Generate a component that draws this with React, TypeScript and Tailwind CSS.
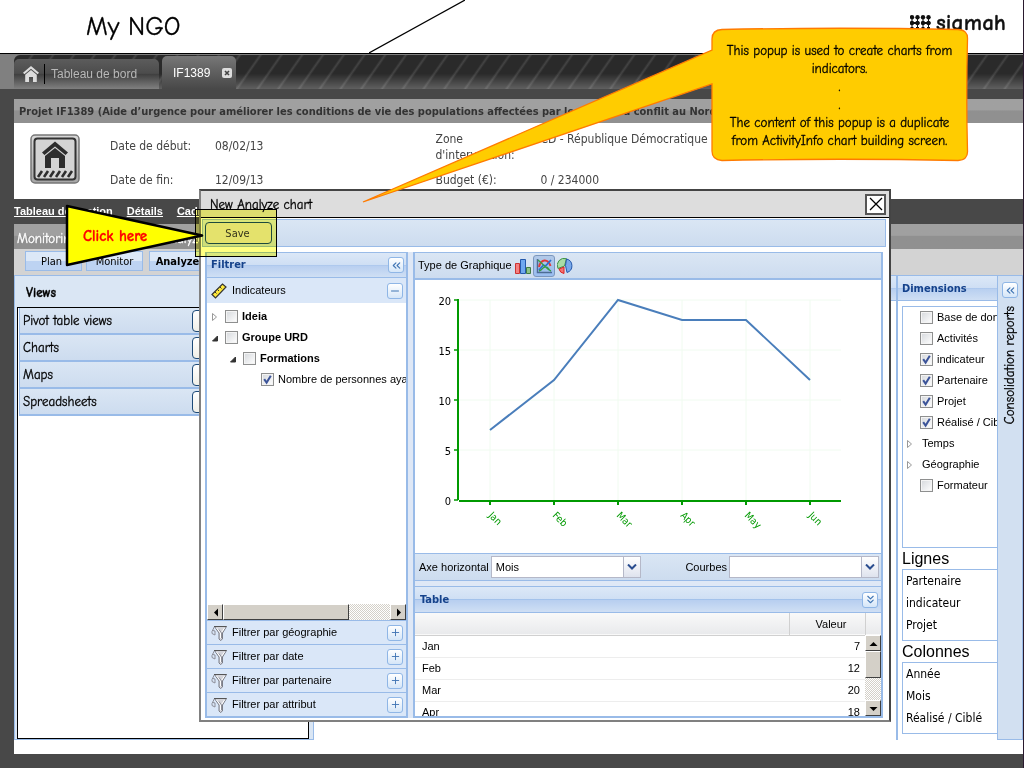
import type { ReactNode } from "react";
import { ChevronsDown, ChevronsLeft, Minus, Plus } from "lucide-react";

const comic =
  "font-['Comic_Sans_MS','Comic_Neue',Lato,sans-serif] [-webkit-text-stroke:0.3px_currentColor]";
const arial = "font-['Liberation_Sans',Arial,sans-serif]";
const tahoma = "font-['DejaVu_Sans_Condensed','DejaVu_Sans',sans-serif]";
const barFill = "bg-linear-to-b from-[#dae6f4] to-[#cddcef]";
const headFill =
  "bg-[linear-gradient(#dce8f7,#cfdff4_48%,#99bbe8_48%,#b8cff0_54%,#cfdff4)]";
const dither =
  "bg-[repeating-conic-gradient(#d4d0c8_0_25%,#fff_0_50%)] bg-[length:2px_2px]";

function ToolButton({ label, children }: { label: string; children: ReactNode }) {
  return (
    <button
      aria-label={label}
      className="flex size-4 shrink-0 items-center justify-center rounded-[3px] border border-[#8fb6e6] bg-linear-to-b from-white to-[#d5e6f8] text-[#3f74b3]"
    >
      {children}
    </button>
  );
}

function Check({ label, checked, bold }: { label: string; checked?: boolean; bold?: boolean }) {
  return (
    <label className="flex items-center gap-1 whitespace-nowrap">
      <span className="relative block size-[13px] shrink-0">
        <input
          type="checkbox"
          defaultChecked={checked}
          className="peer block size-[13px] appearance-none border border-[#8e8f8f] bg-linear-to-br from-[#d5d8dc] to-white shadow-[inset_0_0_0_1px_#f4f4f4]"
        />
        <svg viewBox="0 0 13 13" className="pointer-events-none absolute inset-0 hidden size-[13px] peer-checked:block">
          <path d="M3.2 6.2 5.6 9.6 9.8 2.8" fill="none" stroke="#3c5499" strokeWidth="2" />
        </svg>
      </span>
      <span className={bold ? "font-bold" : ""}>{label}</span>
    </label>
  );
}

function Arrow({ open }: { open?: boolean }) {
  return (
    <svg viewBox="0 0 8 10" className="h-[10px] w-2 shrink-0">
      {open ? (
        <path d="M6.500 3v5H1.500z" fill="#333" stroke="#333" />
      ) : (
        <path d="M1.5 1.5v7l4-3.5z" fill="#fff" stroke="#999" />
      )}
    </svg>
  );
}

function ScrollArrow({ dir }: { dir: "left" | "right" | "up" | "down" }) {
  const d = {
    left: "M8 1.500v8L4 5.500z",
    right: "M4 1.500v8l4-4z",
    up: "M1.500 8h8L5.500 4z",
    down: "M1.500 4h8L5.500 8z",
  }[dir];
  return (
    <button
      aria-label={"Scroll " + dir}
      className="flex size-4 shrink-0 items-center justify-center border border-t-white border-r-[#404040] border-b-[#404040] border-l-white bg-[#d4d0c8]"
    >
      <svg viewBox="0 0 11 11" className="size-[11px]">
        <path d={d} />
      </svg>
    </button>
  );
}

function House({ className }: { className: string }) {
  return (
    <svg viewBox="0 0 16 16" className={className} fill="currentColor">
      <path d="M8 0 16 6.800 14.600 8.300 8 2.800 1.400 8.300 0 6.800z" />
      <path d="M8 4 13.800 8.800V16H10V11H6v5H2.200V8.800z" />
    </svg>
  );
}

function ProjectIcon() {
  return (
    <svg viewBox="0 0 50 50" className="size-[50px]">
      <defs>
        <linearGradient id="plate" x1="0" y1="0" x2="0" y2="1">
          <stop offset="0" stopColor="#d8d8d8" />
          <stop offset="1" stopColor="#a6a6a6" />
        </linearGradient>
      </defs>
      <rect x="1" y="1" width="48" height="48" rx="4" fill="url(#plate)" stroke="#777" strokeWidth="1.500" />
      <rect x="4.500" y="4.500" width="41" height="41" rx="3" fill="#d4d4d4" stroke="#333" strokeWidth="2" />
      <path d="M25 7.500 38 18.500 35.500 21 25 12.500 14.500 21 12 18.500z" fill="#2d2d2d" />
      <path d="M25 14 35 22V34H29V24H21V34H15V22z" fill="#2d2d2d" />
      <path d="M8 43 12 37M14 43 18 37M20 43 24 37M26 43 30 37M32 43 36 37M38 43 42 37" stroke="#2d2d2d" strokeWidth="2.600" />
    </svg>
  );
}

function SigmahMark() {
  return (
    <svg viewBox="0 0 21 16" className="h-4 w-[21px]" fill="#111">
      {[2, 7.5, 13, 18.5].map((x) =>
        [2.2, 8].map((y) => <circle key={x + "-" + y} cx={x} cy={y} r="2.200" />)
      )}
      <path d="M.5 12h3v4h-3zM6 12h3v4H6zM11.500 12h3v4h-3zM17 12h3v4h-3z" />
      <path d="M1.500 2h1v12h-1zM7 2h1v12H7zM12.500 2h1v12h-1zM18 2h1v12h-1z" />
      <path d="M0 7h9.500v2H0zM11 7h9.500v2H11z" />
    </svg>
  );
}

function Header() {
  return (
    <header className="relative flex h-[54px] items-center justify-between border-b border-black bg-white pr-[17px] pl-[86px]">
      <svg viewBox="0 0 96 53" className="absolute top-0 left-[369px] h-[53px] w-24">
        <path d="M0 53 96 0" stroke="#000" strokeWidth="1.200" />
      </svg>
      <h1 className={`text-[26px] leading-none ${comic}`}>My NGO</h1>
      <div className="flex items-center gap-[5px] pb-2">
        <SigmahMark />
        <span className={`text-[23px] leading-none font-bold text-[#111] ${comic}`}>sigmah</span>
      </div>
    </header>
  );
}

function TabBar() {
  return (
    <nav className={`flex h-[35px] items-end bg-[#808080] pl-[14px] text-xs ${arial}`}>
      <div className="flex h-[34px] flex-1 items-end gap-[3px] rounded-tl-md bg-[linear-gradient(transparent_55%,#ffffff40),repeating-linear-gradient(125deg,#2a2a2a_0_13px,#444_15px,#2a2a2a_17px)]">
        <a
          href="#bord"
          className="flex h-[30px] w-[145px] items-center rounded-t-[5px] bg-[linear-gradient(#5c5c5c,#4c4c4c_48%,#3e3e3e_50%,#808080)] pl-[9px] text-[#b8b8b8]"
        >
          <House className="size-4 text-[#ddd]" />
          <span className="ml-[5px] h-5 border-l border-black pl-1.5 leading-5">Tableau de bord</span>
        </a>
        <a
          href="#if1389"
          className="flex h-[33px] w-[74px] items-center gap-3 rounded-t-[5px] bg-linear-to-b from-[#777] to-[#484848] pl-[11px] text-white"
        >
          <span>IF1389</span>
          <svg viewBox="0 0 10 10" className="size-[10px]">
            <rect width="10" height="10" rx="2" fill="#ddd" />
            <path d="M3 3l4 4M7 3l-4 4" stroke="#444" strokeWidth="1.600" />
          </svg>
        </a>
      </div>
    </nav>
  );
}

function ProjectInfo() {
  return (
    <section className={`flex h-[76px] bg-white pt-[11px] pl-4 text-xs text-[#444] ${tahoma}`}>
      <ProjectIcon />
      <dl className="ml-[30px] grid grid-cols-[105px_1fr] content-start gap-y-[18px] pt-1 leading-4">
        <dt>Date de début:</dt>
        <dd>08/02/13</dd>
        <dt>Date de fin:</dt>
        <dd>12/09/13</dd>
      </dl>
      <dl className="-mt-[3px] ml-[172px] grid grid-cols-[105px_1fr] content-start gap-y-[9px] leading-4 whitespace-nowrap">
        <dt className="whitespace-normal">Zone d'intervention:</dt>
        <dd>CD - République Démocratique</dd>
        <dt>Budget (€):</dt>
        <dd>0 / 234000</dd>
      </dl>
    </section>
  );
}

function ViewsPanel() {
  return (
    <aside className={`flex w-[300px] shrink-0 flex-col border border-[#99bbe8] bg-[#dae6f4] pr-1 pl-0.5 text-[13px] ${comic}`}>
      <h2 className="h-[31px] pl-[9px] leading-[34px] font-bold">Views</h2>
      <ul className="flex-1 border border-black bg-white pl-px">
        {["Pivot table views", "Charts", "Maps", "Spreadsheets"].map((v) => (
          <li key={v} className={`flex h-[27px] items-center border-b-2 border-l border-[#99bbe8] pt-px pl-[3px] ${barFill}`}>
            <span className="w-[169px]">{v}</span>
            <button aria-label={v} className="h-[22px] w-24 rounded border border-[#1d4a78] bg-linear-to-b from-white to-[#f0efe8]" />
          </li>
        ))}
      </ul>
    </aside>
  );
}

function ListBox({ title, items }: { title: string; items: string[] }) {
  return (
    <section>
      <h3 className={`h-[21px] text-base leading-[21px] ${arial}`}>{title}</h3>
      <ul className={`h-[72px] border border-r-0 border-[#99bbe8] bg-white pl-[3px] text-xs leading-[22px] whitespace-nowrap ${tahoma}`}>
        {items.map((i) => (
          <li key={i}>{i}</li>
        ))}
      </ul>
    </section>
  );
}

function DimensionsPanel() {
  return (
    <aside className={`w-[101px] shrink-0 overflow-hidden border-l-2 border-[#99bbe8] bg-white text-[11px] ${arial}`}>
      <h2 className={`h-[26px] border-y border-[#99bbe8] pl-1 leading-[25px] font-bold text-[#15428b] ${tahoma} ${headFill}`}>
        Dimensions
      </h2>
      <div className="pt-[5px] pl-1">
        <ul className="h-[242px] border border-r-0 border-[#99bbe8]">
          {[
            { label: "Base de données", on: false },
            { label: "Activités", on: false },
            { label: "indicateur", on: true },
            { label: "Partenaire", on: true },
            { label: "Projet", on: true },
            { label: "Réalisé / Ciblé", on: true },
          ].map(({ label, on }) => (
            <li key={label} className="flex h-[21px] items-center pl-[17px]">
              <Check label={label} checked={on} />
            </li>
          ))}
          {["Temps", "Géographie"].map((l) => (
            <li key={l} className="flex h-[21px] items-center gap-2 pl-[3px]">
              <Arrow />
              {l}
            </li>
          ))}
          <li className="flex h-[21px] items-center pl-[17px]">
            <Check label="Formateur" />
          </li>
        </ul>
        <ListBox title="Lignes" items={["Partenaire", "indicateur", "Projet"]} />
        <ListBox title="Colonnes" items={["Année", "Mois", "Réalisé / Ciblé"]} />
      </div>
    </aside>
  );
}

function FilterPanel() {
  return (
    <section className="flex w-[203px] flex-col border-2 border-t border-[#99bbe8] bg-white">
      <header className={`flex h-[25px] shrink-0 items-center justify-between border-b border-[#99bbe8] pr-0.5 pl-1 ${headFill}`}>
        <h3 className={`pt-px font-bold text-[#15428b] ${tahoma}`}>Filtrer</h3>
        <ToolButton label="Collapse filters">
          <ChevronsLeft size={13} />
        </ToolButton>
      </header>
      <header className="flex h-[25px] shrink-0 items-center justify-between bg-[#dae7f8] pr-[3px] pl-1">
        <h4 className="flex items-center gap-[5px]">
          <svg viewBox="0 0 16 16" className="size-4">
            <path d="M1 11.500 11.500 1 15 4 4.500 15z" fill="#ffe93b" stroke="#333" strokeWidth="1.200" />
            <path d="M4 9l1.500 1.500M6.500 6.500 8 8M9 4l1.500 1.500" stroke="#333" />
          </svg>
          Indicateurs
        </h4>
        <ToolButton label="Collapse indicators">
          <Minus size={12} />
        </ToolButton>
      </header>
      <ul className="min-h-0 flex-1 overflow-hidden pt-[3px] pl-1">
        <li className="flex h-[21px] items-center gap-1.5">
          <Arrow />
          <Check label="Ideia" bold />
        </li>
        <li className="flex h-[21px] items-center gap-1.5">
          <Arrow open />
          <Check label="Groupe URD" bold />
        </li>
        <li className="flex h-[21px] items-center gap-1.5 pl-[18px]">
          <Arrow open />
          <Check label="Formations" bold />
        </li>
        <li className="flex h-[21px] items-center pl-[50px]">
          <Check label="Nombre de personnes ayant" checked />
        </li>
      </ul>
      <div className={`flex h-4 shrink-0 ${dither}`}>
        <ScrollArrow dir="left" />
        <div className="w-[126px] border border-t-white border-r-[#404040] border-b-[#404040] border-l-white bg-[#d4d0c8]" />
        <div className="flex-1" />
        <ScrollArrow dir="right" />
      </div>
      {["géographie", "date", "partenaire", "attribut"].map((f) => (
        <div key={f} className="flex h-6 shrink-0 items-center justify-between border-t border-[#99bbe8] bg-[#dae7f8] pr-[3px] pl-1">
          <span className="flex items-center gap-[5px]">
            <svg viewBox="0 0 16 16" className="size-4">
              <path d="M3.500 1.500h12L11.500 8v6L9.500 15.500 8 14V8z" fill="#d3d4da" stroke="#7b7d86" />
              <path d="M5.500 3 9.500 8v5M13.500 3l-3 4.500" stroke="#fff" fill="none" />
              <path d="M8 4.500 10.500 8v5" stroke="#8c8e98" fill="none" />
              <path d="M3.500 1.500 1 6.500v2l3 1.500V6L2 5.500" stroke="#8c8e98" fill="none" />
              <path d="M3 1.500h12.500" stroke="#555" />
            </svg>
            Filtrer par {f}
          </span>
          <ToolButton label={"Expand " + f}>
            <Plus size={11} />
          </ToolButton>
        </div>
      ))}
    </section>
  );
}

const points: [string, number][] = [
  ["Jan", 7],
  ["Feb", 12],
  ["Mar", 20],
  ["Apr", 18],
  ["May", 18],
  ["Jun", 12],
];

function LineChart() {
  const px = (i: number) => 74 + i * 64;
  const py = (v: number) => 220 - v * 10;
  return (
    <svg viewBox="0 0 464 273" className="h-[273px] w-full shrink-0">
      {[5, 10, 15, 20].map((v) => (
        <path key={v} d={`M43 ${py(v)}H425`} stroke="#f0fbf0" />
      ))}
      {points.map(([m], i) => (
        <path key={m} d={`M${px(i)} 20V220`} stroke="#f0fbf0" />
      ))}
      <path d="M42 19V220" stroke="#090" strokeWidth="2" />
      <path d="M43 221H425" stroke="#090" strokeWidth="2" />
      {[0, 5, 10, 15, 20].map((v) => (
        <g key={v}>
          <path d={`M38 ${py(v)}h4`} stroke="#090" strokeWidth="1.500" />
          <text x="35" y={py(v) + 5} textAnchor="end" className={`text-[11px] ${tahoma}`}>
            {v}
          </text>
        </g>
      ))}
      {points.map(([m], i) => (
        <g key={m}>
          <path d={`M${px(i)} 222v3`} stroke="#090" strokeWidth="2" />
          <text transform={`translate(${px(i) - 2} 236) rotate(45)`} className={`fill-[#090] text-[10px] ${tahoma}`}>
            {m}
          </text>
        </g>
      ))}
      <path
        d={points.map(([, v], i) => `${i ? "L" : "M"}${px(i)} ${py(v)}`).join("")}
        fill="none"
        stroke="#4a7ebb"
        strokeWidth="2"
      />
    </svg>
  );
}

function Combo({ id, label, value }: { id: string; label: string; value: string }) {
  return (
    <div className="flex items-center gap-0.5">
      <label htmlFor={id}>{label}</label>
      <div className="relative">
        <select id={id} className="block h-[22px] w-[150px] appearance-none border border-[#b5b8c8] bg-white pl-1 outline-none">
          <option>{value}</option>
        </select>
        <span className="pointer-events-none absolute inset-y-0 right-0 flex w-[18px] items-center justify-center border border-[#b5b8c8] bg-linear-to-b from-white to-[#dfe3ee]">
          <svg viewBox="0 0 10 6" className="h-[6px] w-[10px]">
            <path d="M1 .5 5 4.500 9 .5" fill="none" stroke="#2a4d8f" strokeWidth="2" />
          </svg>
        </span>
      </div>
    </div>
  );
}

function ChartPanel() {
  return (
    <section className="flex min-h-0 flex-1 flex-col border-2 border-t border-[#99bbe8] bg-white">
      <div className={`flex h-[27px] shrink-0 items-center border-b-2 border-[#99bbe8] pl-[3px] ${barFill}`}>
        <span className="mr-0.5">Type de Graphique</span>
        <button aria-label="Bars" className="flex size-[18px] items-center justify-center">
          <svg viewBox="0 0 16 16" className="size-4">
            <path d="M.5 5.500h4v10h-4z" fill="#f48080" stroke="#c33" />
            <path d="M5.500 1.500h5v14h-5z" fill="#6fa8ef" stroke="#2458ab" />
            <path d="M11.500 9.500h4v6h-4z" fill="#8fc48a" stroke="#417c42" />
          </svg>
        </button>
        <button aria-label="Lines" className="ml-px flex size-[22px] items-center justify-center rounded-[3px] border border-[#7c97bd] bg-linear-to-b from-[#b2c9e8] to-[#99bdf0]">
          <svg viewBox="0 0 16 16" className="size-4" fill="none">
            <path d="M1.500 1v13.500H16" stroke="#4d6b96" strokeWidth="1.500" />
            <path d="M3 9C5 .5 12 .5 14.500 8" stroke="#e03a3a" strokeWidth="2" />
            <path d="M3 12 7 7.500h3l5-5.500" stroke="#2b6fd0" strokeWidth="1.700" />
            <path d="M2 2l11 10M3 13C7 12 6 9 9.500 9S12 12 15 13" stroke="#3a9b46" strokeWidth="1.400" />
          </svg>
        </button>
        <button aria-label="Pie" className="ml-px flex size-[18px] items-center justify-center">
          <svg viewBox="0 0 16 16" className="size-4">
            <path d="M7.500 8 1 10.500A7 7 0 0 1 9.500 .7z" fill="#a9dca6" stroke="#3f9347" />
            <path d="M9.500 1a7 7 0 0 1 .5 13.500L8.500 7.500z" fill="#7aa9ea" stroke="#2458ab" />
            <path d="M7 9v6.500a6 6 0 0 1-5-4.500z" fill="#f27272" stroke="#d22" />
          </svg>
        </button>
      </div>
      <LineChart />
      <div className={`flex h-[28px] shrink-0 items-center justify-between border-y border-[#99bbe8] pr-0.5 pl-1 ${barFill}`}>
        <Combo id="axis" label="Axe horizontal" value="Mois" />
        <Combo id="curves" label="Courbes" value="" />
      </div>
      <div className="h-[5px] shrink-0 bg-[#dfe8f6]" />
      <header className={`flex h-[27px] shrink-0 items-center justify-between border-y border-[#99bbe8] pr-[3px] pl-[5px] ${headFill}`}>
        <h3 className={`pt-px font-bold text-[#15428b] ${tahoma}`}>Table</h3>
        <ToolButton label="Collapse table">
          <ChevronsDown size={13} />
        </ToolButton>
      </header>
      <div className="relative min-h-0 flex-1 overflow-hidden">
        <table className="w-full border-collapse">
          <thead>
            <tr className="h-[22px] border-b border-[#d0d0d0] bg-linear-to-b from-[#f9f9f9] to-[#e9eaec]">
              <th aria-label="Mois" />
              <th className="w-[76px] border-x border-[#d0d0d0] pl-2 font-normal">Valeur</th>
              <th aria-label="Scroll" className="w-4" />
            </tr>
          </thead>
          <tbody>
            {points.slice(0, 4).map(([m, v]) => (
              <tr key={m} className="h-[22px] border-b border-[#ededed]">
                <td className="pl-[7px]">{m}</td>
                <td className="pr-[5px] text-right">{v}</td>
                <td />
              </tr>
            ))}
          </tbody>
        </table>
        <div className={`absolute top-[22px] right-0 bottom-0 flex w-4 flex-col ${dither}`}>
          <ScrollArrow dir="up" />
          <div className="h-[27px] border border-t-white border-r-[#404040] border-b-[#404040] border-l-white bg-[#d4d0c8]" />
          <div className="flex-1" />
          <ScrollArrow dir="down" />
        </div>
      </div>
    </section>
  );
}

function ChartDialog() {
  return (
    <div
      role="dialog"
      aria-label="New Analyze chart"
      className={`absolute top-[189px] left-[199px] flex h-[533px] w-[692px] flex-col border-2 border-[#808080] border-t-[#444] border-r-[#444] bg-white text-[11px] ${arial}`}
    >
      <header className="flex h-[27px] shrink-0 items-center justify-between border-b border-black bg-[#ddd] pr-[3px] pl-[9px]">
        <h2 className={`pt-0.5 text-[13px] ${comic}`}>New Analyze chart</h2>
        <button aria-label="Close" className="flex size-[21px] items-center justify-center border-2 border-[#555] bg-white">
          <svg viewBox="0 0 14 14" className="size-[14px]">
            <path d="M1 1l12 12M13 1 1 13" stroke="#000" strokeWidth="1.300" />
          </svg>
        </button>
      </header>
      <div className={`mt-px mr-[3px] ml-px flex h-7 shrink-0 items-center border border-[#99bbe8] pl-0.5 ${barFill}`}>
        <button className={`h-[22px] w-[67px] rounded border border-[#1d4a78] bg-[#e4e2d8] pt-0.5 pr-0.5 text-[11px] text-[#333] ${tahoma}`}>
          Save
        </button>
      </div>
      <div className="mt-[5px] mr-[6px] mb-[2px] ml-1 flex min-h-0 flex-1 gap-[5px] bg-[#dfe8f6]">
        <FilterPanel />
        <ChartPanel />
      </div>
    </div>
  );
}

function SaveHint() {
  return (
    <>
      <div className="pointer-events-none absolute top-[209px] left-[195px] h-12 w-[82px] border border-black bg-[#ffff80] mix-blend-multiply" />
      <div className="pointer-events-none absolute top-[203px] left-[64px] h-[66px] w-[142px]">
        <svg viewBox="0 0 142 66" className="absolute inset-0 h-[66px] w-[142px]">
          <path d="M3 3v59L138 32.500z" fill="#ff0" stroke="#000" strokeWidth="2.500" strokeLinejoin="round" />
        </svg>
        <p className={`relative pl-[19px] text-[15px] leading-[66px] font-bold text-[#f00] ${comic}`}>Click here</p>
      </div>
    </>
  );
}

function Balloon() {
  return (
    <div className="pointer-events-none absolute top-[26px] left-[360px] h-[180px] w-[610px]">
      <svg viewBox="0 0 610 180" className="absolute inset-0 h-[180px] w-[610px]">
        <path
          d="M362 3.500Q480 1 598 3.500Q608 4 607.500 13Q606 70 607.500 125Q608 134 598 134.500Q480 132 362 134.500Q352 134 352 125V58L3 176 352 24V13Q352 4 362 3.500z"
          fill="#fc0"
          stroke="#ff7a00"
          strokeWidth="1.300"
        />
      </svg>
      <div className={`relative ml-[352px] w-[255px] pt-4 text-center text-[13px] leading-[18px] ${comic}`}>
        <p>
          This popup is used to create charts from
          <br />
          indicators.
        </p>
        <p>.</p>
        <p>.</p>
        <p>
          The content of this popup is a duplicate
          <br />
          from ActivityInfo chart building screen.
        </p>
      </div>
    </div>
  );
}

const tabButton =
  "h-5 w-[57px] border border-[#99bbe8] bg-linear-to-b from-[#dce8f7] from-50% to-[#bdd3f2] to-50% pt-0.5";

export default function App() {
  return (
    <div className={`relative flex min-h-screen flex-col overflow-hidden border-r border-[#2a1a2e] bg-[#484848] text-black ${arial}`}>
      <Header />
      <TabBar />
      <div className="mt-[10px] mb-[14px] ml-[14px] flex flex-1 flex-col">
        <h2 className={`h-6 overflow-hidden bg-linear-to-b from-[#a0a0a0] from-45% to-[#909090] to-50% pl-[5px] text-[11px] leading-[26px] font-bold whitespace-nowrap text-[#333] ${tahoma}`}>
          Projet IF1389 (Aide d’urgence pour améliorer les conditions de vie des populations affectées par le retour du conflit au Nord Kivu)
        </h2>
        <ProjectInfo />
        <nav className="flex h-[25px] w-[186px] items-center gap-[14px] overflow-hidden text-[11px] font-bold whitespace-nowrap text-white underline">
          <a href="#gestion">Tableau de gestion</a>
          <a href="#details">Détails</a>
          <a href="#cadre">Cadre</a>
        </nav>
        <div className={`flex h-[25px] items-center gap-[85px] bg-linear-to-b from-[#a0a0a0] from-45% to-[#909090] to-50% pt-1 pl-[3px] text-[13px] text-white ${comic}`}>
          <span>Monitoring</span>
          <span>Analyze</span>
        </div>
        <div className={`flex h-[26px] items-start gap-1 bg-[#d3d3d3] pt-0.5 pl-[11px] text-[11px] ${tahoma}`}>
          <button className={`${tabButton} pr-1`}>Plan</button>
          <button className={tabButton}>Monitor</button>
          <button className={`${tabButton} ml-0.5 font-bold`}>Analyze</button>
        </div>
        <div className="flex flex-1 bg-white pb-[14px]">
          <ViewsPanel />
          <main className="flex-1 bg-white">
            <div className={`h-[26px] border-y border-[#99bbe8] ${headFill}`} />
          </main>
          <DimensionsPanel />
          <aside className="flex w-[26px] shrink-0 flex-col items-center gap-2 border border-[#99bbe8] bg-[#d2e0f1] pt-1.5">
            <ToolButton label="Expand reports">
              <ChevronsLeft size={13} />
            </ToolButton>
            <span className={`rotate-180 text-[13px] leading-5 [writing-mode:vertical-rl] ${comic}`}>Consolidation reports</span>
          </aside>
        </div>
      </div>
      <ChartDialog />
      <SaveHint />
      <Balloon />
    </div>
  );
}
